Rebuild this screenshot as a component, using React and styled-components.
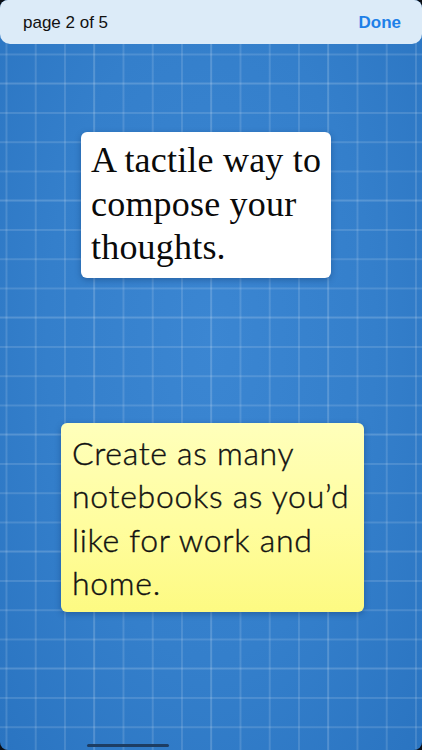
import React from "react";
import styled, { createGlobalStyle } from "styled-components";

const Global = createGlobalStyle`
  html, body { margin: 0; padding: 0; background: #0b0f16; }
  body { width: 422px; height: 750px; overflow: hidden; }
  #root { width: 422px; height: 750px; }
`;

const Screen = styled.div`
  position: relative;
  width: 422px;
  height: 750px;
  border-radius: 8px;
  overflow: hidden;
  display: flex;
  flex-direction: column;
  background-color: #3480cc;
  background-image:
    linear-gradient(to right, rgba(255,255,255,0.1) 1.5px, transparent 1.5px),
    linear-gradient(to bottom, rgba(255,255,255,0.1) 1.5px, transparent 1.5px),
    linear-gradient(to right, rgba(255,255,255,0.13) 1.5px, transparent 1.5px),
    linear-gradient(to bottom, rgba(255,255,255,0.13) 1.5px, transparent 1.5px),
    radial-gradient(ellipse at 50% 45%, #3b86d2 0%, #347fcb 55%, #2a74c1 100%);
  background-size: 117px 117px, 117px 117px, 29.25px 29.25px, 29.25px 29.25px, 100% 100%;
  background-position: 93.5px 82.5px, 93.5px 82.5px, 5.5px 53.5px, 5.5px 53.5px, 0 0;
`;

const TopBar = styled.header`
  height: 44px;
  flex: none;
  display: flex;
  align-items: center;
  justify-content: space-between;
  padding: 0 21px 0 23px;
  background: #dcebf8;
  border-radius: 0 0 10px 10px;
  font-family: "Liberation Sans", Arial, sans-serif;
  font-size: 17px;
`;

const PageLabel = styled.span`
  color: #111;
  padding-top: 1px;
`;

const DoneButton = styled.button`
  border: 0;
  background: none;
  padding: 0;
  font: inherit;
  font-weight: bold;
  color: #1e80e8;
  padding-top: 1px;
`;

const Board = styled.main`
  flex: 1;
  display: flex;
  flex-direction: column;
  align-items: flex-start;
`;

const Note = styled.div`
  box-sizing: border-box;
  margin-top: ${(p) => p.$top}px;
  margin-left: ${(p) => p.$left}px;
  width: ${(p) => p.$width}px;
  padding: ${(p) => p.$pad};
  border-radius: 6px;
  line-height: 43.5px;
  color: #0a0a0a;
  box-shadow: 0 2px 6px rgba(10, 40, 90, 0.35);
`;

const WhiteNote = styled(Note)`
  background: #ffffff;
  font-family: "Liberation Serif", "Times New Roman", serif;
  font-size: 36px;
  letter-spacing: 0.2px;
`;

const YellowNote = styled(Note)`
  background: linear-gradient(to bottom, #ffffbb 0%, #fffd9e 55%, #fdfa82 100%);
  font-family: Lato, "Noto Sans", sans-serif;
  font-weight: 300;
  font-size: 32px;
  letter-spacing: 0.7px;
  color: #111;
  -webkit-text-stroke: 0.4px #111;
`;

const HomeIndicator = styled.div`
  position: absolute;
  left: 87px;
  bottom: 3px;
  width: 82px;
  height: 3px;
  border-radius: 2px;
  background: #1d3d63;
`;

export default function App() {
  return (
    <>
      <Global />
      <Screen>
        <TopBar>
          <PageLabel>page 2 of 5</PageLabel>
          <DoneButton>Done</DoneButton>
        </TopBar>
        <Board>
          <WhiteNote $top={88} $left={81} $width={250} $pad="7px 6px 8px 10px">
            A tactile way to compose your thoughts.
          </WhiteNote>
          <YellowNote $top={145} $left={61} $width={303} $pad="8px 6px 7px 11px">
            Create as many notebooks as you’d like for work and home.
          </YellowNote>
        </Board>
        <HomeIndicator />
      </Screen>
    </>
  );
}
